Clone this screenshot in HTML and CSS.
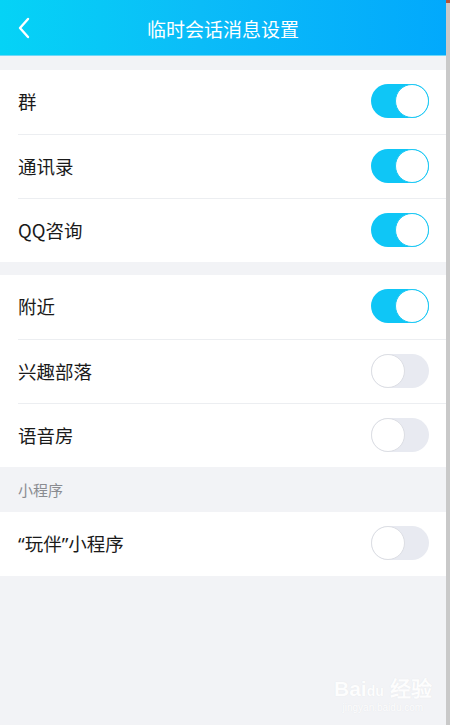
FILE: index.html
```html
<!DOCTYPE html>
<html lang="zh-CN">
<head>
  <meta charset="UTF-8">
  <meta name="viewport" content="width=device-width, initial-scale=1.0">
  <title>临时会话消息设置</title>
  <link rel="stylesheet" href="styles.css">
</head>
<body>

<div class="screen">
  <div class="app">
    <div class="header">
      <span class="back">
        <svg width="14" height="22" viewBox="0 0 14 22"><path d="M11 2 L3 11 L11 20" fill="none" stroke="#fff" stroke-width="2.4" stroke-linecap="round" stroke-linejoin="round"/></svg>
      </span>
      <h1>临时会话消息设置</h1>
    </div>

    <div class="group">
      <div class="row"><span>群</span><span class="switch on"></span></div>
      <div class="row"><span>通讯录</span><span class="switch on"></span></div>
      <div class="row"><span>QQ咨询</span><span class="switch on"></span></div>
    </div>

    <div class="group">
      <div class="row"><span>附近</span><span class="switch on"></span></div>
      <div class="row"><span>兴趣部落</span><span class="switch"></span></div>
      <div class="row"><span>语音房</span><span class="switch"></span></div>
    </div>

    <div class="section-title">小程序</div>
    <div class="group flush">
      <div class="row"><span><span class="q">“</span>玩伴<span class="q">”</span>小程序</span><span class="switch"></span></div>
    </div>

    <div class="watermark">
      <div class="wm-logo">Bai<span class="paw">du</span> 经验</div>
      <div class="wm-url">jingyan.baidu.com</div>
    </div>
  </div>
  <div class="scrollbar"></div>
</div>

</body>
</html>
```

FILE: styles.css
```css
body {
  margin: 0;
  font-family: "Noto Sans CJK SC", "Noto Sans", sans-serif;
  background: #f2f3f6;
}

.screen {
  display: flex;
  width: 450px;
  height: 725px;
  overflow: hidden;
}

.app {
  position: relative;
  flex: 1;
  background: #f2f3f6;
}

.scrollbar {
  width: 4px;
  background: #c9c9c9;
  border-top: 3px solid #b5533a;
}

.header {
  position: relative;
  height: 56px;
  display: flex;
  align-items: center;
  justify-content: center;
  background: linear-gradient(90deg, #05d3f6 0%, #0bbcf8 45%, #02a9fc 100%);
  border-bottom: 1px solid #6fd8f7;
  box-sizing: border-box;
}

.header h1 {
  margin: 0;
  color: #fff;
  font-size: 19px;
  font-weight: 400;
  padding-top: 2px;
}

.back {
  position: absolute;
  left: 17px;
  top: 17px;
  display: flex;
}

.group {
  background: #fff;
  margin-top: 14px;
}

.group + .group {
  margin-top: 13px;
}

.group.flush {
  margin-top: 0;
}

.row {
  height: 64px;
  margin-left: 18px;
  padding-right: 17px;
  padding-bottom: 2px;
  display: flex;
  align-items: center;
  justify-content: space-between;
  font-size: 18.5px;
  color: #1a1a1a;
  border-top: 1px solid #eceef1;
  box-sizing: border-box;
}

.row:first-child {
  border-top: none;
}

.q {
  font-family: "Noto Sans", sans-serif;
}

.switch {
  position: relative;
  width: 58px;
  height: 34px;
  border-radius: 17px;
  background: #e8eaf1;
  box-sizing: border-box;
}

.switch::after {
  content: "";
  position: absolute;
  top: 0;
  left: 0;
  width: 34px;
  height: 34px;
  border-radius: 50%;
  background: #fff;
  border: 1.5px solid #dcdee4;
  box-sizing: border-box;
}

.switch.on {
  background: #0fc6f6;
}

.switch.on::after {
  left: 24px;
  border-color: #1dc8f4;
}

.section-title {
  height: 45px;
  padding-left: 18px;
  display: flex;
  align-items: center;
  font-size: 15px;
  color: #8a8c91;
}

.watermark {
  position: absolute;
  left: 334px;
  top: 672px;
  text-align: center;
  opacity: 0.85;
}

.wm-logo {
  font-family: "Liberation Sans", sans-serif;
  font-size: 21px;
  font-weight: 700;
  color: #ffffff;
  text-shadow: 0 0 1px #dfe1e5;
}

.paw {
  font-size: 14px;
}

.wm-url {
  font-family: "Liberation Sans", sans-serif;
  font-size: 10px;
  color: #ffffff;
  text-shadow: 0 0 1px #dfe1e5;
}
```
